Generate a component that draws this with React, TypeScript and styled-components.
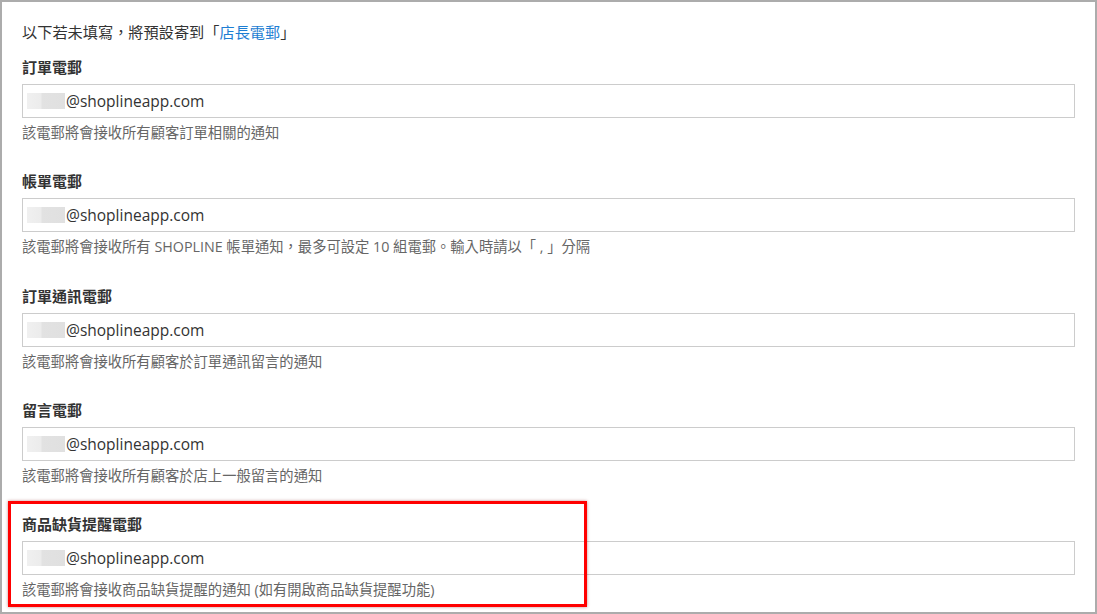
import React from "react";
import styled, { createGlobalStyle } from "styled-components";

const GlobalStyle = createGlobalStyle`
  html, body { margin: 0; padding: 0; background: #ffffff; }
  body { font-family: "Open Sans", "Noto Sans", "Noto Sans CJK TC", sans-serif; }
  * { box-sizing: border-box; }
`;

const Frame = styled.div`
  width: 1097px;
  height: 614px;
  border: 2px solid #acacac;
  background: #ffffff;
  padding: 20px 20px 0 20px;
  overflow: hidden;
  font-family: "Open Sans", "Noto Sans CJK TC", sans-serif;
`;

const Intro = styled.div`
  font-size: 15.2px;
  line-height: 20px;
  color: #333333;
  margin-bottom: 15px;
`;

const Link = styled.a`
  color: #1e7ed3;
  text-decoration: none;
`;

const Section = styled.div`
  position: relative;
  padding-bottom: 28.3px;
`;

const Label = styled.div`
  font-size: 15px;
  line-height: 20px;
  font-weight: 700;
  color: #333333;
  margin-bottom: 7px;
`;

const InputBox = styled.div`
  height: 34px;
  border: 1px solid #cccccc;
  background: #ffffff;
  display: flex;
  align-items: center;
  padding-left: 4px;
  font-size: 15.5px;
  color: #333333;
`;

const Redacted = styled.span`
  display: inline-block;
  width: 38px;
  height: 16px;
  margin-right: 1px;
  background: linear-gradient(
    to right,
    #f0f0f0 0px,
    #ececec 14px,
    #e2e2e2 15px,
    #e0e0e0 38px
  );
`;

const Help = styled.div`
  font-size: 14.3px;
  line-height: 20px;
  color: #666666;
  margin-top: 5px;
`;

const Highlight = styled.div`
  position: absolute;
  left: -14px;
  top: -13px;
  width: 579px;
  height: 106px;
  border: 3px solid #ff0000;
  box-shadow: 0 0 3px rgba(120, 0, 0, 0.45);
  pointer-events: none;
`;

type Item = { label: string; help: string; highlight?: boolean };

const items: Item[] = [
  { label: "訂單電郵", help: "該電郵將會接收所有顧客訂單相關的通知" },
  {
    label: "帳單電郵",
    help: "該電郵將會接收所有 SHOPLINE 帳單通知，最多可設定 10 組電郵。輸入時請以「 , 」分隔",
  },
  { label: "訂單通訊電郵", help: "該電郵將會接收所有顧客於訂單通訊留言的通知" },
  { label: "留言電郵", help: "該電郵將會接收所有顧客於店上一般留言的通知" },
  {
    label: "商品缺貨提醒電郵",
    help: "該電郵將會接收商品缺貨提醒的通知 (如有開啟商品缺貨提醒功能)",
    highlight: true,
  },
];

export default function App() {
  return (
    <>
      <GlobalStyle />
      <Frame>
        <Intro>
          以下若未填寫，將預設寄到「<Link href="#">店長電郵</Link>」
        </Intro>
        {items.map((it) => (
          <Section key={it.label}>
            <Label>{it.label}</Label>
            <InputBox>
              <Redacted />
              @shoplineapp.com
            </InputBox>
            <Help>{it.help}</Help>
            {it.highlight && <Highlight />}
          </Section>
        ))}
      </Frame>
    </>
  );
}
